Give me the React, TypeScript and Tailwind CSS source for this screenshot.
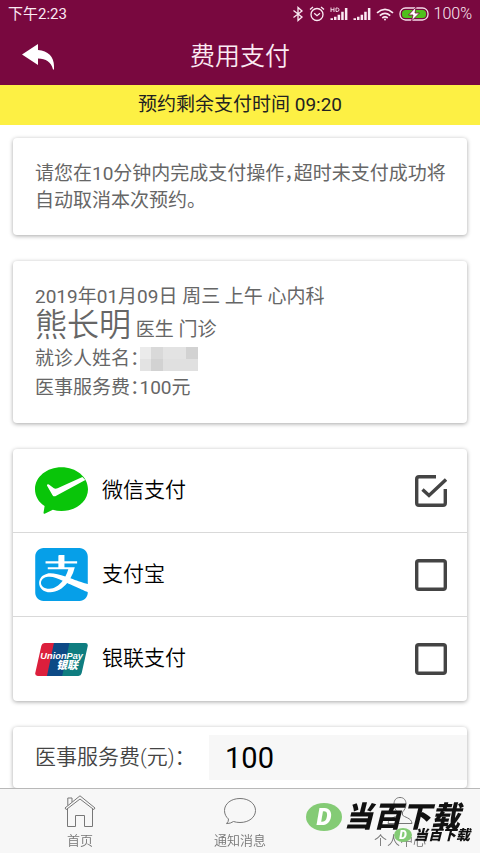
import { useState } from "react";
import { SiAlipay } from "react-icons/si";

type PayMethod = {
  id: string;
  name: string;
  logo: React.ReactNode;
};

const BluetoothIcon = () => (
  <svg viewBox="0 0 12 16" className="h-4 w-3" fill="none" stroke="currentColor" strokeWidth="1.3">
    <path d="M1.5 4.5 L10 11 L6 14.5 V1.5 L10 5 L1.5 11.5" />
  </svg>
);

const AlarmIcon = () => (
  <svg viewBox="0 0 16 16" className="size-4" fill="none" stroke="currentColor" strokeWidth="1.3">
    <circle cx="8" cy="8.5" r="6" />
    <path d="M5.2 7.2 L8 9.7 L11 7.2 M1 3.6 L4 1 M15 3.6 L12 1" />
  </svg>
);

const SignalIcon = ({ hd = false }: { hd?: boolean }) => (
  <svg viewBox="0 0 18 14" className="h-3.5 w-[18px]" fill="currentColor">
    <path d="M0.5 11.2H3V13H0.5z M4 9.8h2.5V13H4z M7.6 7.8h2.5V13H7.6z M11.2 4.8h2.5V13h-2.5z M14.9 1h2.5v12h-2.5z" />
    {hd && (
      <path
        d="M1 0.5v4.5 M4 0.5v4.5 M1 2.7h3 M6 1v3.5h1.2q1.8 0 1.8-1.75T7.2 1z"
        fill="none"
        stroke="currentColor"
        strokeWidth="0.9"
      />
    )}
  </svg>
);

const WifiIcon = () => (
  <svg viewBox="0 0 18 13" className="h-[13px] w-[18px]" fill="none" stroke="currentColor" strokeWidth="1.7">
    <path d="M1 4.8 Q9 -2 17 4.8 M3.8 7.6 Q9 3.2 14.2 7.6 M6.3 10 Q9 7.8 11.7 10" />
    <circle cx="9" cy="11.6" r="1" fill="currentColor" stroke="none" />
  </svg>
);

const BatteryIcon = () => (
  <svg viewBox="0 0 30 14" className="h-3.5 w-[30px]">
    <rect x="1" y="1" width="28" height="12" rx="5.5" fill="none" stroke="#f5dcea" strokeWidth="1.3" />
    <rect x="3" y="3" width="24" height="8" rx="3.5" fill="#4fc01c" />
    <path d="M17 0 L9.5 8 H14 L12.5 14 L20.5 6 H16 Z" fill="#fff" stroke="#79083f" strokeWidth="0.8" />
  </svg>
);

const BackIcon = () => (
  <svg viewBox="0 0 32 26" className="h-[26px] w-8" fill="currentColor">
    <path d="M0 10.5 L16 0 V6 C26 6.5 32 13 32 22 V25.5 H31 C29 18 24 14.5 16 14.5 V21 Z" />
  </svg>
);

const WechatLogo = () => (
  <svg viewBox="0 0 160 140" className="h-[47px] w-[53px]">
    <path
      d="M80 0 C124 0 160 29 160 66 S124 132 80 132 Q66 132 54 128 L29 140 Q25 141 26 136 L29 117 C11 105 0 87 0 66 C0 29 36 0 80 0Z"
      fill="#09c509"
    />
    <path
      d="M36 55 Q37 49 42 52 L57 63 Q62 66 68 63 L143 29 L152 38 L64 86 Q57 90 53 84 Z"
      fill="#fff"
    />
  </svg>
);

const UnionPayLogo = () => (
  <svg viewBox="0 0 160 100" className="h-[33px] w-[53px]">
    <path d="M29 0 H62 L40 100 H8 Q-2 100 1 89 L19 8 Q21 0 29 0Z" fill="#dc1f3c" />
    <path d="M57 0 H110 L88 100 H36 Z" fill="#0d4a86" />
    <path d="M104 0 H152 Q162 0 159 11 L141 92 Q139 100 131 100 H82 Z" fill="#0f7d80" />
    <text
      x="16"
      y="48"
      fill="#fff"
      fontSize="28"
      fontWeight="700"
      fontStyle="italic"
      fontFamily="'Liberation Sans', sans-serif"
    >
      UnionPay
    </text>
    <text
      x="64"
      y="79"
      fill="#fff"
      fontSize="33"
      fontWeight="900"
      fontStyle="italic"
      fontFamily="'Noto Sans CJK SC', sans-serif"
    >
      银联
    </text>
  </svg>
);

const HomeIcon = () => (
  <svg viewBox="0 0 32 32" className="size-8" fill="none" stroke="currentColor" strokeWidth="1">
    <path d="M1 13 L16 0.8 L31 13 L29.8 14.6 L16 4 L2.2 14.6 Z" />
    <path d="M3.5 13.8 V31.5 H11.5 V20.5 H20.5 V31.5 H28.5 V13.8" />
    <path d="M3.8 10.5 V3 H8 V7" />
  </svg>
);

const MessageIcon = () => (
  <svg viewBox="0 0 32 32" className="size-8" fill="none" stroke="currentColor" strokeWidth="1">
    <path d="M16 3.5 C25 3.5 31.5 8.8 31.5 15.5 S25 27.5 16 27.5 Q12.5 27.5 9.5 26.5 Q6.5 28.6 2.5 28.6 Q4.8 26.5 4.5 24 C2 22 0.5 19 0.5 15.5 C0.5 8.8 7 3.5 16 3.5Z" />
  </svg>
);

const PersonIcon = () => (
  <svg viewBox="0 0 32 32" className="size-8" fill="none" stroke="currentColor" strokeWidth="1">
    <path d="M16 2.5 C20 2.5 22 5.2 22 9 C22 12.5 20.5 15 18.5 17 V20 C20 22.5 27.5 22.5 28 28.5 H4 C4.5 22.5 12 22.5 13.5 20 V17 C11.5 15 10 12.5 10 9 C10 5.2 12 2.5 16 2.5Z" />
  </svg>
);

const payMethods: PayMethod[] = [
  { id: "wechat", name: "微信支付", logo: <WechatLogo /> },
  { id: "alipay", name: "支付宝", logo: <SiAlipay className="size-[53px] text-[#069fe8]" /> },
  { id: "unionpay", name: "银联支付", logo: <UnionPayLogo /> },
];

const tabs = [
  { label: "首页", icon: <HomeIcon /> },
  { label: "通知消息", icon: <MessageIcon /> },
  { label: "个人中心", icon: <PersonIcon /> },
];

// grey blocks that cover the patient name
const mosaic = [
  "bg-[#ebebeb]",
  "bg-[#d9d9d9]",
  "bg-[#e3e3e3]",
  "bg-[#e3e3e3]",
  "bg-[#d2d2d2]",
  "bg-[#e3e3e3]",
  "bg-[#d2d2d2]",
  "bg-[#e0e0e0]",
  "bg-[#e0e0e0]",
  "bg-[#e0e0e0]",
];

function Card({ children, className = "" }: { children: React.ReactNode; className?: string }) {
  return (
    <section className={`rounded-sm bg-white shadow-[0_1px_4px_rgba(0,0,0,0.35)] ${className}`}>
      {children}
    </section>
  );
}

function CheckBox({ id, checked, onChange }: { id: string; checked: boolean; onChange: () => void }) {
  return (
    <span className="relative size-8 text-[#444]">
      <input
        id={id}
        type="checkbox"
        checked={checked}
        onChange={onChange}
        className="block size-8 cursor-pointer appearance-none"
      />
      <svg
        viewBox="0 0 32 32"
        className="pointer-events-none absolute inset-0 size-8"
        fill="none"
        stroke="currentColor"
        strokeWidth="3.4"
      >
        {checked ? (
          <>
            <path d="M21 1.7 H4 Q1.7 1.7 1.7 4 V28 Q1.7 30.3 4 30.3 H28 Q30.3 30.3 30.3 28 V14" />
            <path d="M7.5 14.5 L14 20.5 L31 4.5" />
          </>
        ) : (
          <rect x="1.7" y="1.7" width="28.6" height="28.6" rx="2" />
        )}
      </svg>
    </span>
  );
}

export default function App() {
  const [selected, setSelected] = useState("wechat");
  const [fee, setFee] = useState("100");

  return (
    <div className="flex min-h-screen flex-col bg-white font-['Roboto','Noto_Sans_CJK_SC',sans-serif] text-[#666] [font-feature-settings:'halt']">
      <header className="bg-[#79083f] text-[#fbeaf3]">
        {/* ===== Status bar ===== */}
        <div className="flex h-7 items-center justify-between px-2">
          <span className="text-[15px]">下午2:23</span>
          <div className="flex items-center gap-[5px]">
            <BluetoothIcon />
            <AlarmIcon />
            <SignalIcon hd />
            <SignalIcon />
            <WifiIcon />
            <BatteryIcon />
            <span className="text-base font-light">100%</span>
          </div>
        </div>
        <div className="grid h-[57px] grid-cols-[1fr_auto_1fr] items-center px-[22px]">
          <button type="button" aria-label="返回" className="w-8 cursor-pointer text-white">
            <BackIcon />
          </button>
          <h1 className="text-[25px] font-[350]">费用支付</h1>
        </div>
      </header>

      <div className="flex h-10 items-center justify-center bg-[#fdf044] text-[19px] text-[#222]">
        预约剩余支付时间 09:20
      </div>

      <main className="flex flex-col gap-[26px] px-[13px] pt-[13px]">
        <Card className="pt-[22px] pr-4 pb-[21px] pl-[22px] text-[19px] leading-[27px]">
          <p>请您在10分钟内完成支付操作，超时未支付成功将自动取消本次预约。</p>
        </Card>

        {/* ===== Appointment ===== */}
        <Card className="px-[22px] py-[21px] text-[19px] leading-[29px]">
          <p>2019年01月09日 周三 上午 心内科</p>
          <p>
            <span className="text-[32px] font-[350]">熊长明</span> 医生 门诊
          </p>
          <p className="flex items-center">
            就诊人姓名：
            <span className="grid w-[58px] grid-cols-5">
              {mosaic.map((tone, i) => (
                <span key={i} className={`h-3 ${tone}`} />
              ))}
            </span>
          </p>
          <p>医事服务费：100元</p>
        </Card>

        {/* ===== Pay methods ===== */}
        <Card className="divide-y-1 divide-[#d9d9d9]">
          {payMethods.map((m) => (
            <div key={m.id} className="flex h-[84px] items-center pr-5 pl-[22px]">
              {m.logo}
              <label
                htmlFor={m.id}
                className="ml-3.5 flex-1 cursor-pointer text-[21px] font-[350] text-black"
              >
                {m.name}
              </label>
              <CheckBox id={m.id} checked={selected === m.id} onChange={() => setSelected(m.id)} />
            </div>
          ))}
        </Card>

        <Card className="flex items-center py-2 pl-[22px]">
          <label htmlFor="fee" className="text-[21px] font-[350] text-[#444]">
            医事服务费(元)：
          </label>
          <input
            id="fee"
            type="text"
            value={fee}
            onChange={(e) => setFee(e.target.value)}
            className="ml-6 h-[45px] min-w-0 flex-1 bg-[#f7f7f7] px-4 text-[29px] text-black focus:outline-none"
          />
        </Card>
      </main>

      <footer className="sticky bottom-0 mt-auto border-t border-[#b8b8b8] bg-[#f7f7f7]">
        <nav className="grid h-16 grid-cols-3 text-[13px] font-[350] text-[#777]">
          {tabs.map((tab) => (
            <a key={tab.label} href="#" className="flex flex-col items-center pt-1.5">
              {tab.icon}
              <span className="leading-7">{tab.label}</span>
            </a>
          ))}
        </nav>
        <div className="pointer-events-none absolute top-2.5 right-5 flex items-center gap-0.5 font-black text-[#111] italic">
          <span className="flex h-7 w-9 items-center justify-center rounded-[50%] bg-[#84cb75] text-2xl text-white">
            D
          </span>
          <span className="text-[29px] leading-9">当百下载</span>
        </div>
        <div className="pointer-events-none absolute right-2.5 bottom-2 flex items-center gap-0.5 font-black text-[#111] italic">
          <span className="flex h-3.5 w-[18px] items-center justify-center rounded-[50%] bg-[#84cb75] text-xs text-white">
            D
          </span>
          <span className="text-sm">当百下载</span>
        </div>
      </footer>
    </div>
  );
}
